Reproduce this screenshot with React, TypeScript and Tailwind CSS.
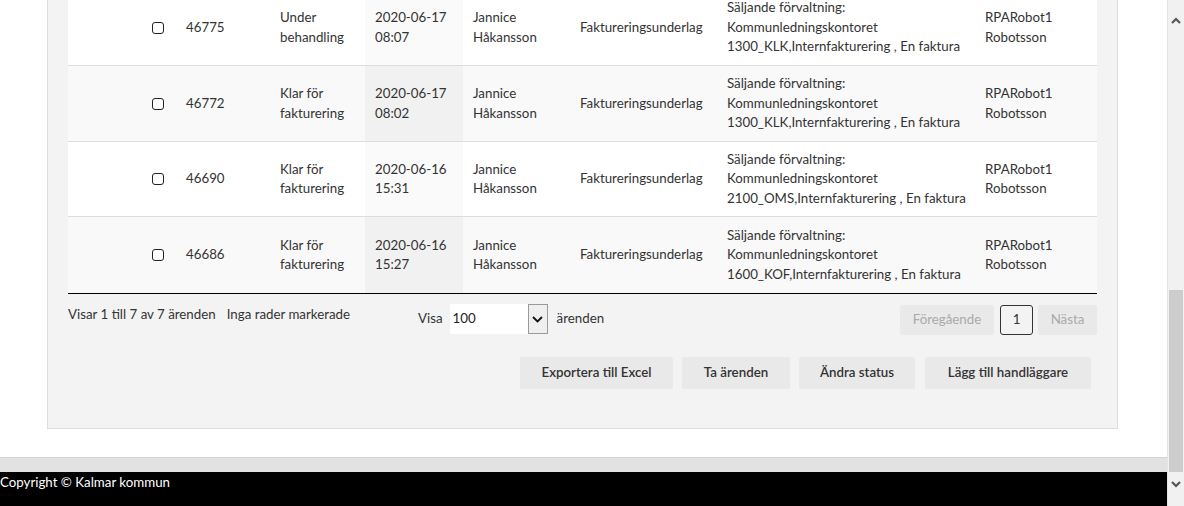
import React from "react";

type Row = {
  id: string;
  status: [string, string];
  date: [string, string];
  code: string;
  shade: boolean;
  h: string;
  first?: boolean;
};

const rows: Row[] = [
  { id: "46775", status: ["Under", "behandling"], date: ["2020-06-17", "08:07"], code: "1300_KLK", shade: false, h: "h-[76px]", first: true },
  { id: "46772", status: ["Klar för", "fakturering"], date: ["2020-06-17", "08:02"], code: "1300_KLK", shade: true, h: "h-[76px]" },
  { id: "46690", status: ["Klar för", "fakturering"], date: ["2020-06-16", "15:31"], code: "2100_OMS", shade: false, h: "h-[75px]" },
  { id: "46686", status: ["Klar för", "fakturering"], date: ["2020-06-16", "15:27"], code: "1600_KOF", shade: true, h: "h-[76px]" },
];

const Chevron = ({ up }: { up?: boolean }) => (
  <svg width="10" height="7" viewBox="0 0 10 7">
    <path
      d={up ? "M1 6 L5 2 L9 6" : "M1 1 L5 5 L9 1"}
      fill="none"
      stroke="#555"
      strokeWidth="2.2"
    />
  </svg>
);

const App = () => {
  return (
    <div
      className="flex h-[506px] w-[1184px] overflow-hidden bg-white text-[13.3px] leading-[19.5px] text-[#333]"
      style={{ fontFamily: "Lato, 'Open Sans', sans-serif" }}
    >
      {/* page */}
      <div className="flex w-[1167px] flex-col">
        <div className="flex-1 overflow-hidden">
          {/* main panel, top is scrolled out of view */}
          <div className="ml-[47px] w-[1071px] border border-t-0 border-[#dddddd] bg-[#f3f3f3] px-[20px] pb-[39px]">
            {/* table rows */}
            <div className="border-b border-black">
              {rows.map((r, i) => (
                <div
                  key={r.id}
                  className={
                    "grid grid-cols-[108px_94px_95px_98px_107px_147px_258px_123px] items-stretch " +
                    r.h +
                    (i < rows.length - 1 ? " border-b border-[#dddddd]" : "") +
                    (r.first ? " -mt-[10px]" : "") +
                    (r.shade ? " bg-[#f9f9f9]" : " bg-white")
                  }
                >
                  <div className="flex items-center justify-end pr-[12px]">
                    <span className="block h-[12px] w-[12px] rounded-[3px] border border-[#222] bg-white" />
                  </div>
                  <div className="flex items-center pl-[10px]">{r.id}</div>
                  <div className="flex flex-col justify-center pl-[10px]">
                    <span>{r.status[0]}</span>
                    <span>{r.status[1]}</span>
                  </div>
                  <div
                    className={
                      "flex flex-col justify-center pl-[10px] " +
                      (r.shade ? "bg-[#f1f1f1]" : "bg-[#fafafa]")
                    }
                  >
                    <span>{r.date[0]}</span>
                    <span>{r.date[1]}</span>
                  </div>
                  <div className="flex flex-col justify-center pl-[10px]">
                    <span>Jannice</span>
                    <span>Håkansson</span>
                  </div>
                  <div className="flex items-center pl-[10px]">Faktureringsunderlag</div>
                  <div className="flex flex-col justify-center pl-[10px] whitespace-nowrap">
                    <span>Säljande förvaltning:</span>
                    <span>Kommunledningskontoret</span>
                    <span>{r.code},Internfakturering , En faktura</span>
                  </div>
                  <div className="flex flex-col justify-center pl-[10px]">
                    <span>RPARobot1</span>
                    <span>Robotsson</span>
                  </div>
                </div>
              ))}
            </div>

            {/* info / length / paging */}
            <div className="flex items-start pt-[10px]">
              <div className="mt-[1px] flex w-[350px]">
                <span>Visar 1 till 7 av 7 ärenden</span>
                <span className="ml-[11px]">Inga rader markerade</span>
              </div>
              <div className="flex items-center">
                <span>Visa</span>
                <div className="ml-[7px] flex h-[30px] w-[98px] items-center bg-white">
                  <span className="flex-1 pl-[3px] text-[#222]">100</span>
                  <span className="flex h-[30px] w-[20px] items-center justify-center border border-[#9a9a9a] bg-[#efefef]">
                    <svg width="11" height="7" viewBox="0 0 11 7">
                      <path d="M1 1 L5.5 5.5 L10 1" fill="none" stroke="#111" strokeWidth="1.8" />
                    </svg>
                  </span>
                </div>
                <span className="ml-[9px]">ärenden</span>
              </div>
              <div className="ml-auto mt-[1px] flex gap-[5px]">
                <span className="flex h-[30px] w-[94px] items-center justify-center rounded-[2px] bg-[#e9e9e9] text-[#aaaaaa]">
                  Föregående
                </span>
                <span className="ml-[1px] flex h-[30px] w-[33px] items-center justify-center rounded-[3px] border border-[#333]">
                  1
                </span>
                <span className="flex h-[30px] w-[59px] items-center justify-center rounded-[2px] bg-[#e9e9e9] text-[#aaaaaa]">
                  Nästa
                </span>
              </div>
            </div>

            {/* action buttons */}
            <div className="mt-[22px] flex justify-end gap-[9px] pr-[6px] font-semibold">
              <button className="h-[32px] w-[153px] rounded-[2px] bg-[#e9e9e9]">Exportera till Excel</button>
              <button className="h-[32px] w-[108px] rounded-[2px] bg-[#e9e9e9]">Ta ärenden</button>
              <button className="h-[32px] w-[116px] rounded-[2px] bg-[#e9e9e9]">Ändra status</button>
              <button className="ml-[1px] h-[32px] w-[166px] rounded-[2px] bg-[#e9e9e9]">Lägg till handläggare</button>
            </div>
          </div>
        </div>

        {/* footer */}
        <div className="h-[15px] border-t border-[#d4d4d4] bg-[#e2e2e2]" />
        <div className="h-[34px] bg-black pt-[1px] text-white">Copyright © Kalmar kommun</div>
      </div>

      {/* window scrollbar */}
      <div className="flex w-[17px] flex-col border-l border-[#e4e4e4] bg-[#f1f1f1]">
        <div className="flex h-[290px] justify-center pt-[17px]">
          <Chevron up />
        </div>
        <div className="mx-[1px] h-[182px] bg-[#cdcdcd]" />
        <div className="flex flex-1 justify-center pt-[9px]">
          <Chevron />
        </div>
      </div>
    </div>
  );
};

export default App;
